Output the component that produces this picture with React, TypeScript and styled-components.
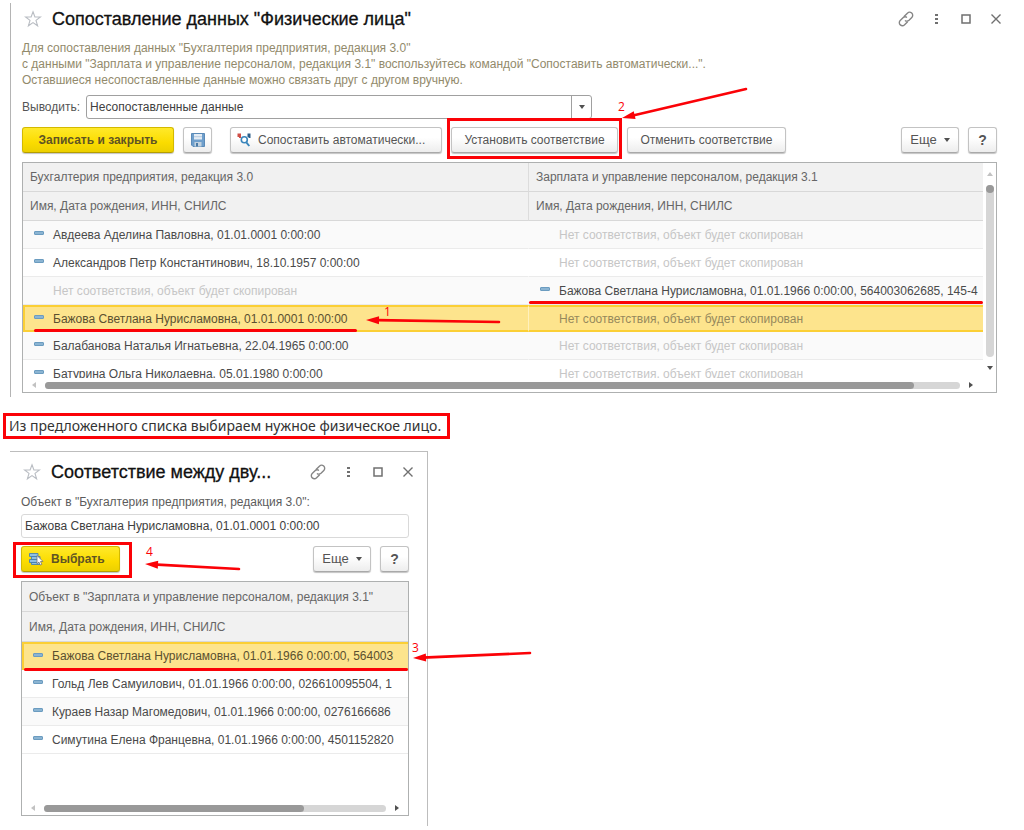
import React from "react";
import styled, { createGlobalStyle, css } from "styled-components";

const RED = "#fb0207";

const GlobalStyle = createGlobalStyle`
  *, *::before, *::after { box-sizing: border-box; }
  body {
    margin: 0;
    background: #fff;
    color: #555;
    font: 12px/16px "Liberation Sans", Arial, sans-serif;
  }
  button, input, select { font: inherit; color: inherit; }
`;

const Page = styled.main`
  padding: 3px 0 4px;
  overflow: hidden;
`;

const MainWindow = styled.section`
  margin-left: 10px;
  padding: 0 27px 4px 11px;
  border-left: 1px solid #b4b4b4;
`;

const DialogWindow = styled.section`
  margin: 12px 0 0 10px;
  width: 100%;
  max-width: 418px;
  padding: 4px 18px 10px 11px;
  border: solid #bdbdbd;
  border-width: 1px 1px 0 0;
`;

const TitleBar = styled.header`
  display: flex;
  align-items: center;
  height: 32px;
  padding-left: 2px;
`;

const Title = styled.h1`
  flex: 1;
  min-width: 0;
  margin: 0 0 0 10px;
  font-size: 18px;
  line-height: 24px;
  font-weight: 400;
  color: #111;
  -webkit-text-stroke: 0.3px #111;
  white-space: nowrap;
`;

const WindowTools = styled.div`
  display: flex;
  gap: 12px;
  margin-right: -8px;
`;

const IconButton = styled.button`
  display: flex;
  align-items: center;
  justify-content: center;
  width: 18px;
  height: 18px;
  padding: 0;
  border: 0;
  background: none;
  color: #707070;
`;

const Hint = styled.p`
  margin: 5px 0 0;
  line-height: 16px;
  color: #928a6b;
`;

const FilterRow = styled.div`
  display: flex;
  align-items: center;
  gap: 6px;
  margin-top: 7px;
`;

const SelectBox = styled.div`
  position: relative;
  flex: 0 1 506px;
`;

const Select = styled.select`
  appearance: none;
  display: block;
  width: 100%;
  height: 24px;
  padding: 0 24px 0 3px;
  border: 1px solid #a0a0a0;
  border-radius: 3px;
  background: #fff;
  color: #404040;
`;

const SelectArrow = styled.span`
  position: absolute;
  inset: 1px 1px 1px auto;
  display: flex;
  align-items: center;
  justify-content: center;
  width: 20px;
  border-left: 1px solid #a0a0a0;
  pointer-events: none;
`;

const Toolbar = styled.div`
  display: flex;
  align-items: center;
  margin: 8px 0 9px;
`;

const Spacer = styled.div`
  flex: 1;
`;

const Button = styled.button<{ $primary?: boolean; $start?: boolean; $width: number; $gap?: number }>`
  display: flex;
  align-items: center;
  justify-content: ${(p) => (p.$start ? "flex-start" : "center")};
  gap: 7px;
  width: ${(p) => p.$width}px;
  height: 26px;
  margin-left: ${(p) => p.$gap ?? 0}px;
  padding: 0 6px;
  border: 1px solid #c3c3c3;
  border-bottom-color: #a9a9a9;
  border-radius: 3px;
  background: linear-gradient(#fff 40%, #ededed);
  box-shadow: 0 1px 1px #c4c4c4;
  white-space: nowrap;
  ${(p) =>
    p.$primary &&
    css`
      border-color: #d3b900;
      border-bottom-color: #b59e00;
      background: linear-gradient(#ffe92a, #fbdc00 60%, #ecd000);
      font-weight: 700;
      color: #5f5424;
    `}
`;

const Large = styled.span`
  font-size: 13px;
`;

const Strong = styled.span`
  font-size: 14px;
  font-weight: 700;
`;

const Highlight = styled.div<{ $inset: string; $gap?: number }>`
  position: relative;
  margin-left: ${(p) => p.$gap ?? 0}px;
  &::after {
    content: "";
    position: absolute;
    inset: ${(p) => p.$inset};
    border: 3px solid ${RED};
    pointer-events: none;
  }
`;

const Caption = styled.p`
  width: fit-content;
  margin: 16px 0 0 3px;
  padding: 0 6px 1px 3px;
  border: 3px solid ${RED};
  font: 14px/19px "Noto Sans", sans-serif;
  color: #333;
`;

const FieldLabel = styled.label`
  display: block;
  margin-top: 6px;
  color: #5c5c5c;
`;

const TextField = styled.input`
  display: block;
  width: 100%;
  height: 24px;
  margin-top: 4px;
  padding: 0 3px;
  border: 1px solid #d9d9d9;
  border-radius: 3px;
  color: #404040;
`;

const TableFrame = styled.div`
  position: relative;
  border: 1px solid #aeb0b0;
`;

const FrameBody = styled.div`
  display: flex;
`;

const Viewport = styled.div<{ $height: number }>`
  flex: 1;
  min-width: 0;
  height: ${(p) => p.$height}px;
  overflow: hidden;
`;

const HeadCell = styled.th<{ $wide?: boolean }>`
  height: 29px;
  width: ${(p) => (p.$wide ? "505px" : "auto")};
  padding: 0 7px;
  border-bottom: 1px solid #d8d8d8;
  background: #f1f1f1;
  font-weight: 400;
  text-align: left;
  white-space: nowrap;
  color: #666;
  & + & { border-left: 1px solid #dcdcdc; }
`;

const Cell = styled.td<{ $muted?: boolean }>`
  position: relative;
  height: 28px;
  padding: 0 0 0 11px;
  border-bottom: 1px solid #ebebeb;
  white-space: nowrap;
  color: ${(p) => (p.$muted ? "#c6c6c6" : "#4a4a4a")};
  & + & { border-left: 1px solid transparent; }
`;

const Row = styled.tr<{ $selected?: boolean }>`
  &:nth-child(odd) { background: #fafafa; }
  ${(p) =>
    p.$selected &&
    css`
      &&& { background: #fde48d; }
      ${Cell} {
        height: 27px;
        border-top: 2px solid #fbcf35;
        border-bottom: 2px solid #fbcf35;
        color: #5b5030;
      }
      ${Cell}:first-child { border-left: 2px solid #fbcf35; padding-left: 9px; }
      ${Cell} + ${Cell} { border-left: 1px solid #fff1bd; color: #96895c; }
    `}
`;

const Table = styled.table<{ $roomy?: boolean }>`
  width: 100%;
  table-layout: fixed;
  border-collapse: separate;
  border-spacing: 0;
  ${(p) =>
    p.$roomy &&
    css`
      ${HeadCell} { height: 30px; }
      ${Row} ${Cell} { height: 28px; }
    `}
`;

const CellText = styled.span<{ $plain?: boolean }>`
  display: flex;
  align-items: center;
  gap: 9px;
  padding-left: ${(p) => (p.$plain ? 19 : 0)}px;
  overflow: hidden;
`;

const Dash = styled.i`
  flex: none;
  width: 10px;
  height: 4px;
  margin-bottom: 3px;
  border: 1px solid #6b9cc0;
  border-radius: 1px;
  background: #8bb4d2;
`;

const Underline = styled.span<{ $length: string; $left: number; $bottom: number }>`
  position: absolute;
  left: ${(p) => p.$left}px;
  bottom: ${(p) => p.$bottom}px;
  z-index: 1;
  width: ${(p) => p.$length};
  height: 3px;
  border-radius: 2px;
  background: ${RED};
`;

const VScroll = styled.div`
  display: flex;
  flex-direction: column;
  align-items: center;
  justify-content: space-between;
  width: 13px;
  padding: 8px 0 7px;
`;

const VTrack = styled.div`
  flex: 1;
  width: 8px;
  margin: 8px 0;
  border-radius: 4px;
  background: #d6d6d6;
`;

const VThumb = styled.div`
  width: 8px;
  height: 8px;
  border-radius: 4px;
  background: #999;
`;

const HScroll = styled.div<{ $end: number }>`
  display: flex;
  align-items: center;
  justify-content: space-between;
  gap: 8px;
  height: 14px;
  padding: 0 ${(p) => p.$end}px 0 8px;
`;

const HTrack = styled.div`
  flex: 1;
  border-radius: 4px;
  background: #d6d6d6;
`;

const HThumb = styled.div<{ $size: string }>`
  width: ${(p) => p.$size};
  height: 7px;
  border-radius: 4px;
  background: #999;
`;

const Filler = styled.div`
  height: 43px;
`;

const Mark = styled.div<{ $x: string; $y: number }>`
  position: absolute;
  left: ${(p) => p.$x};
  top: ${(p) => p.$y}px;
  z-index: 2;
  width: 0;
  height: 0;
  pointer-events: none;
  svg { position: absolute; left: 0; top: 0; overflow: visible; }
`;

const MarkLabel = styled.span<{ $dx: number; $dy: number }>`
  position: absolute;
  left: ${(p) => p.$dx}px;
  top: ${(p) => p.$dy}px;
  font: 12px/16px "Open Sans", sans-serif;
  color: ${RED};
`;

type MarkProps = { x: string; y: number; dx: number; dy: number; lx: number; ly: number; label: string };

/** Arrow whose tip is at (x, y) and whose tail is dx, dy away from it. */
function ArrowMark({ x, y, dx, dy, lx, ly, label }: MarkProps) {
  const angle = (Math.atan2(dy, dx) * 180) / Math.PI;
  return (
    <Mark $x={x} $y={y}>
      <svg width="1" height="1" aria-hidden="true">
        <line x1={dx * 0.08} y1={dy * 0.08} x2={dx} y2={dy} stroke={RED} strokeWidth="2.6" strokeLinecap="round" />
        <path d="M0 0 13-4V4Z" fill={RED} transform={`rotate(${angle})`} />
      </svg>
      <MarkLabel $dx={lx} $dy={ly}>{label}</MarkLabel>
    </Mark>
  );
}

function Caret({ dir, faint }: { dir: "up" | "down" | "left" | "right"; faint?: boolean }) {
  const d = { up: "M0 5 3 1 6 5Z", down: "M0 1 6 1 3 5Z", left: "M5 0V6L1 3Z", right: "M1 0V6L5 3Z" }[dir];
  return (
    <svg width="6" height="6" viewBox="0 0 6 6" aria-hidden="true">
      <path d={d} fill={faint ? "#c2c2c2" : "#505050"} />
    </svg>
  );
}

const StarIcon = () => (
  <svg width="18" height="18" viewBox="0 0 18 18" fill="none" stroke="#b9bdc3" strokeWidth="1.1">
    <path d="M9 1.800 10.900 7H16.400L12 10.400 13.600 15.800 9 12.600 4.400 15.800 6 10.400 1.600 7H7.100Z" />
  </svg>
);

const LinkIcon = () => (
  <svg width="18" height="18" viewBox="0 0 18 18" fill="none" stroke="#858585" strokeWidth="1.4" strokeLinecap="round">
    <path d="M7.300 6.300 10.400 3.200C11.600 2 13.400 1.900 14.700 3.100S16 6.200 14.800 7.400L12 10.200C10.900 11.200 9.600 11.400 8.400 10.800" />
    <path d="M10.400 11.900 7.600 14.700C6.400 15.900 4.600 16 3.300 14.900S2 11.800 3.200 10.600L6 7.800C7.100 6.800 8.400 6.600 9.500 7.200" />
  </svg>
);

const DotsIcon = () => (
  <svg width="18" height="18" viewBox="0 0 18 18" fill="currentColor">
    <path d="M8 4h3v2H8zM8 8h3v2H8zM8 12h3v2H8z" />
  </svg>
);

const SquareIcon = () => (
  <svg width="18" height="18" viewBox="0 0 18 18" fill="none" stroke="currentColor" strokeWidth="1.5">
    <path d="M5 5h8v8H5z" />
  </svg>
);

const CloseIcon = () => (
  <svg width="18" height="18" viewBox="0 0 18 18" fill="none" stroke="currentColor" strokeWidth="1.4">
    <path d="M4.500 4.500l9 9M13.500 4.500l-9 9" />
  </svg>
);

const SaveIcon = () => (
  <svg width="14" height="14" viewBox="0 0 14 14">
    <path d="M.5.5h13v13H2L.5 12z" fill="#6f9fcc" stroke="#5b8bb8" />
    <path d="M3 1h8v5.500H3z" fill="#e4ecf4" />
    <path d="M3 3.700h8" stroke="#b4cbe0" />
    <path d="M3.500 9h7v4.500h-7z" fill="#c3d2df" />
    <path d="M5 10h2v3.500H5z" fill="#4a7aa6" />
  </svg>
);

const MatchIcon = () => (
  <svg width="14" height="14" viewBox="0 0 14 14" fill="none">
    <path d="M.5.500h3.500v4.500h-2v-1h-1.500z" fill="#cf4f47" />
    <path d="M10.500.500h3v4.500h-2v-1h-1z" fill="#2c5f8a" />
    <circle cx="7.300" cy="6.800" r="3" stroke="#3a86bb" strokeWidth="1.600" fill="#fff" />
    <path d="M9.300 9.300 12.300 13" stroke="#3a86bb" strokeWidth="1.900" />
  </svg>
);

const PickIcon = () => (
  <svg width="16" height="14" viewBox="0 0 16 14">
    <path d="M1.500 1.500h8.500v3H1.500zM3.500 4.500h8.500v3H3.500zM1.500 7.500h8.500v3H1.500zM3.500 10.500h8.500v2H3.500z" fill="#8fc0e2" stroke="#4a82ae" strokeWidth=".9" />
    <path d="M9 3.500v8.300l1.900-1.700 1.300 3 1.600-.7-1.300-2.900h2.600z" fill="#fff" stroke="#777" strokeWidth=".8" />
  </svg>
);

function WindowHeader({ title }: { title: string }) {
  return (
    <TitleBar>
      <IconButton aria-label="Избранное"><StarIcon /></IconButton>
      <Title>{title}</Title>
      <WindowTools>
        <IconButton aria-label="Ссылка"><LinkIcon /></IconButton>
        <IconButton aria-label="Меню"><DotsIcon /></IconButton>
        <IconButton aria-label="Развернуть"><SquareIcon /></IconButton>
        <IconButton aria-label="Закрыть"><CloseIcon /></IconButton>
      </WindowTools>
    </TitleBar>
  );
}

function MoreAndHelp() {
  return (
    <>
      <Button $width={58}><Large>Еще</Large><Caret dir="down" /></Button>
      <Button $width={29} $gap={9}><Strong>?</Strong></Button>
    </>
  );
}

function Item({ text }: { text: string | null }) {
  return text ? (
    <CellText><Dash />{text}</CellText>
  ) : (
    <CellText $plain>Нет соответствия, объект будет скопирован</CellText>
  );
}

const pairs: { left: string | null; right: string | null; selected?: boolean }[] = [
  { left: "Авдеева Аделина Павловна, 01.01.0001 0:00:00", right: null },
  { left: "Александров Петр Константинович, 18.10.1957 0:00:00", right: null },
  { left: null, right: "Бажова Светлана Нурисламовна, 01.01.1966 0:00:00, 564003062685, 145-4" },
  { left: "Бажова Светлана Нурисламовна, 01.01.0001 0:00:00", right: null, selected: true },
  { left: "Балабанова Наталья Игнатьевна, 22.04.1965 0:00:00", right: null },
  { left: "Батурина Ольга Николаевна, 05.01.1980 0:00:00", right: null },
];

const candidates = [
  "Бажова Светлана Нурисламовна, 01.01.1966 0:00:00, 564003",
  "Гольд Лев Самуилович, 01.01.1966 0:00:00, 026610095504, 1",
  "Кураев Назар Магомедович, 01.01.1966 0:00:00, 0276166686",
  "Симутина Елена Францевна, 01.01.1966 0:00:00, 4501152820",
];

export default function App() {
  return (
    <Page>
      <GlobalStyle />
      <MainWindow>
        <WindowHeader title={'Сопоставление данных "Физические лица"'} />
        <Hint>
          Для сопоставления данных "Бухгалтерия предприятия, редакция 3.0"<br />
          с данными "Зарплата и управление персоналом, редакция 3.1" воспользуйтесь командой "Сопоставить автоматически...".<br />
          Оставшиеся несопоставленные данные можно связать друг с другом вручную.
        </Hint>
        <FilterRow>
          <label htmlFor="show">Выводить:</label>
          <SelectBox>
            <Select id="show"><option>Несопоставленные данные</option></Select>
            <SelectArrow><Caret dir="down" /></SelectArrow>
          </SelectBox>
        </FilterRow>
        <Toolbar>
          <Button $primary $width={152}>Записать и закрыть</Button>
          <Button $width={29} $gap={9} aria-label="Записать"><SaveIcon /></Button>
          <Button $start $width={212} $gap={18}><MatchIcon />Сопоставить автоматически...</Button>
          <Highlight $inset="-9px -4px -6px" $gap={9}>
            <Button $width={167}>Установить соответствие</Button>
            <ArrowMark x="171px" y={-9} dx={124} dy={-29} lx={-4} ly={-19} label="2" />
          </Highlight>
          <Button $width={159} $gap={9}>Отменить соответствие</Button>
          <Spacer />
          <MoreAndHelp />
        </Toolbar>
        <TableFrame>
          <FrameBody>
            <Viewport $height={215}>
              <Table>
                <thead>
                  <tr>
                    <HeadCell $wide>Бухгалтерия предприятия, редакция 3.0</HeadCell>
                    <HeadCell>Зарплата и управление персоналом, редакция 3.1</HeadCell>
                  </tr>
                  <tr>
                    <HeadCell>Имя, Дата рождения, ИНН, СНИЛС</HeadCell>
                    <HeadCell>Имя, Дата рождения, ИНН, СНИЛС</HeadCell>
                  </tr>
                </thead>
                <tbody>
                  {pairs.map((p, i) => (
                    <Row key={i} $selected={p.selected}>
                      <Cell $muted={!p.left}>
                        <Item text={p.left} />
                        {p.selected && <Underline $length="323px" $left={9} $bottom={-2} />}
                      </Cell>
                      <Cell $muted={!p.right}>
                        <Item text={p.right} />
                        {p.right && <Underline $length="100%" $left={0} $bottom={0} />}
                      </Cell>
                    </Row>
                  ))}
                </tbody>
              </Table>
            </Viewport>
            <VScroll>
              <Caret dir="up" faint />
              <VTrack><VThumb /></VTrack>
              <Caret dir="down" />
            </VScroll>
          </FrameBody>
          <HScroll $end={22}>
            <Caret dir="left" faint />
            <HTrack><HThumb $size="95%" /></HTrack>
            <Caret dir="right" />
          </HScroll>
          <ArrowMark x="343px" y={157} dx={133} dy={2} lx={18} ly={-16} label="1" />
        </TableFrame>
      </MainWindow>

      <Caption>Из предложенного списка выбираем нужное физическое лицо.</Caption>

      <DialogWindow>
        <WindowHeader title="Соответствие между дву..." />
        <FieldLabel htmlFor="object">Объект в "Бухгалтерия предприятия, редакция 3.0":</FieldLabel>
        <TextField id="object" defaultValue="Бажова Светлана Нурисламовна, 01.01.0001 0:00:00" />
        <Toolbar>
          <Highlight $inset="-4px -12px -6px -8px">
            <Button $primary $start $width={99}><PickIcon />Выбрать</Button>
            <ArrowMark x="124px" y={18} dx={94} dy={5} lx={1} ly={-20} label="4" />
          </Highlight>
          <Spacer />
          <MoreAndHelp />
        </Toolbar>
        <TableFrame>
          <Viewport $height={176}>
            <Table $roomy>
              <thead>
                <tr><HeadCell>Объект в "Зарплата и управление персоналом, редакция 3.1"</HeadCell></tr>
                <tr><HeadCell>Имя, Дата рождения, ИНН, СНИЛС</HeadCell></tr>
              </thead>
              <tbody>
                {candidates.map((name, i) => (
                  <Row key={name} $selected={i === 0}>
                    <Cell>
                      <Item text={name} />
                      {i === 0 && <Underline $length="100%" $left={0} $bottom={-3} />}
                    </Cell>
                  </Row>
                ))}
              </tbody>
            </Table>
          </Viewport>
          <Filler />
          <HScroll $end={8}>
            <Caret dir="left" faint />
            <HTrack><HThumb $size="76%" /></HTrack>
            <Caret dir="right" />
          </HScroll>
          <ArrowMark x="391px" y={76} dx={117} dy={-5} lx={-1} ly={-18} label="3" />
        </TableFrame>
      </DialogWindow>
    </Page>
  );
}
